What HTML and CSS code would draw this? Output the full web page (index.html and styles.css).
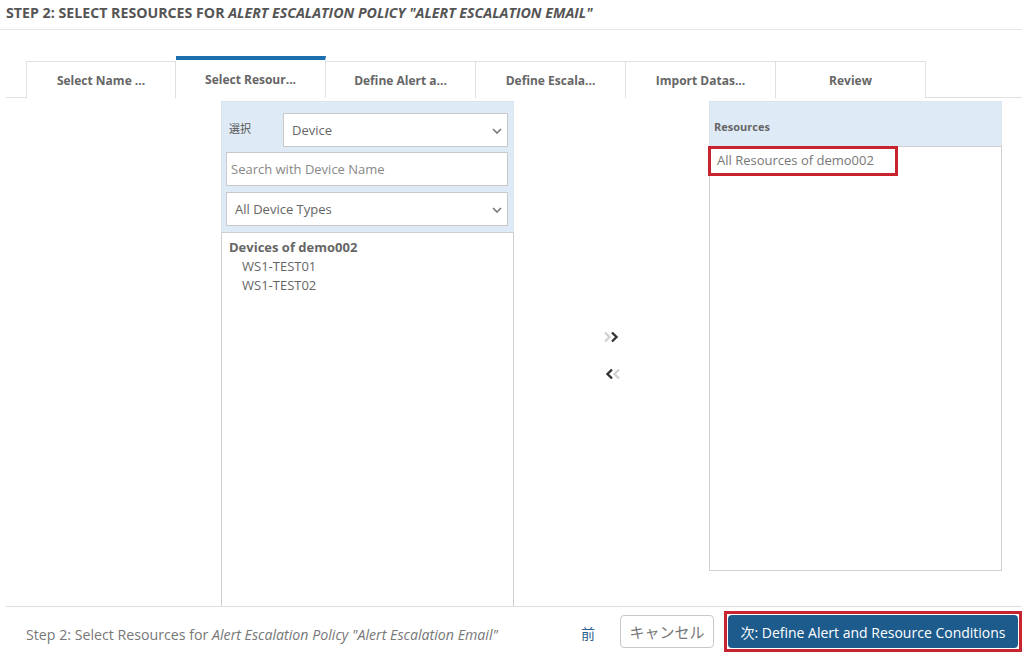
FILE: index.html
```html
<!DOCTYPE html>
<html lang="ja">
<head>
  <meta charset="UTF-8">
  <meta name="viewport" content="width=device-width, initial-scale=1.0">
  <title>Alert Escalation Policy - Step 2</title>
  <link rel="stylesheet" href="styles.css">
</head>
<body>
  <div class="page-title">
    STEP 2: SELECT RESOURCES FOR <em>ALERT ESCALATION POLICY "ALERT ESCALATION EMAIL"</em>
  </div>

  <div class="wizard">
    <ul class="tabs">
      <li>Select Name ...</li>
      <li class="active">Select Resour...</li>
      <li>Define Alert a...</li>
      <li>Define Escala...</li>
      <li>Import Datas...</li>
      <li>Review</li>
    </ul>

    <div class="picker">
      <div class="panel">
        <div class="panel-head">
          <div class="field-row">
            <label class="field-label">選択</label>
            <div class="select-wrap grow">
              <select class="control">
                <option>Device</option>
              </select>
              <svg class="caret" width="10" height="6" viewBox="0 0 10 6"><path d="M1 1l4 4 4-4" fill="none" stroke="#777" stroke-width="1.6"/></svg>
            </div>
          </div>
          <input class="control search" type="text" placeholder="Search with Device Name">
          <div class="select-wrap types">
            <select class="control">
              <option>All Device Types</option>
            </select>
            <svg class="caret" width="10" height="6" viewBox="0 0 10 6"><path d="M1 1l4 4 4-4" fill="none" stroke="#777" stroke-width="1.6"/></svg>
          </div>
        </div>
        <div class="panel-list tall">
          <div class="group-name">Devices of demo002</div>
          <div class="list-item">WS1-TEST01</div>
          <div class="list-item">WS1-TEST02</div>
        </div>
      </div>

      <div class="movers">
        <button class="mover">
          <svg width="18" height="12" viewBox="0 0 18 12">
            <path d="M2 1.5l4.5 4.5L2 10.5" fill="none" stroke="#d0d0d0" stroke-width="2.4"/>
            <path d="M9 1.5l4.5 4.5L9 10.5" fill="none" stroke="#333" stroke-width="2.4"/>
          </svg>
        </button>
        <button class="mover">
          <svg width="18" height="12" viewBox="0 0 18 12">
            <path d="M9 1.5L4.5 6 9 10.5" fill="none" stroke="#333" stroke-width="2.4"/>
            <path d="M16 1.5L11.5 6l4.5 4.5" fill="none" stroke="#d0d0d0" stroke-width="2.4"/>
          </svg>
        </button>
      </div>

      <div class="panel">
        <div class="panel-head short">Resources</div>
        <div class="panel-list">
          <div class="resource-item">All Resources of demo002</div>
        </div>
      </div>
    </div>
  </div>

  <div class="footer">
    <div class="footer-text">Step 2: Select Resources for <em>Alert Escalation Policy "Alert Escalation Email"</em></div>
    <div class="actions">
      <a class="prev-link">前</a>
      <button class="btn btn-cancel">キャンセル</button>
      <span class="highlight">
        <button class="btn btn-primary">次: Define Alert and Resource Conditions</button>
      </span>
    </div>
  </div>
</body>
</html>
```

FILE: styles.css
```css
body {
  margin: 0;
  font-family: 'Open Sans', 'Noto Sans CJK JP', sans-serif;
  color: #666;
  background: #fff;
  width: 1022px;
  height: 653px;
  overflow: hidden;
}
.page-title {
  height: 30px;
  line-height: 25px;
  padding-left: 6px;
  font-size: 14.2px;
  font-weight: 700;
  color: #555;
  border-bottom: 1px solid #e6e6e6;
  box-sizing: border-box;
  white-space: nowrap;
}
.page-title em {
  font-style: italic;
}
.wizard {
  margin-left: 6px;
}
.tabs {
  list-style: none;
  margin: 26px 0 0;
  padding: 0 0 0 20px;
  display: flex;
  align-items: flex-end;
  border-bottom: 1px solid #e0e0e0;
  height: 42px;
  box-sizing: border-box;
}
.tabs li {
  width: 150px;
  height: 37px;
  box-sizing: border-box;
  border: 1px solid #e0e0e0;
  border-bottom: none;
  border-left: none;
  margin-bottom: -1px;
  background: #fff;
  font-size: 12px;
  font-weight: 700;
  color: #666;
  text-align: center;
  line-height: 38px;
}
.tabs li:first-child {
  border-left: 1px solid #e0e0e0;
}
.tabs li.active {
  height: 42px;
  border-top: 4px solid #1b6fae;
  line-height: 39px;
  border-bottom: 1px solid #fff;
}
.picker {
  display: grid;
  grid-template-columns: 293px 195px 293px;
  margin: 3px 0 0 215px;
}
.panel {
  display: flex;
  flex-direction: column;
}
.panel-head {
  background: #deebf6;
  padding: 11px 5px 6px 4px;
  display: flex;
  flex-direction: column;
  gap: 5px;
  border: 1px solid #dbe5ee;
  border-bottom: none;
}
.panel-head .types {
  margin-top: 1px;
}
.panel-head.short {
  height: 45px;
  box-sizing: border-box;
  padding: 17px 4px 0;
  font-size: 11px;
  font-weight: 700;
  color: #666;
}
.field-row {
  display: flex;
  align-items: center;
}
.field-label {
  width: 57px;
  padding-left: 3px;
  box-sizing: border-box;
  font-size: 11px;
  color: #555;
  margin-top: -4px;
}
.grow {
  flex: 1;
}
.select-wrap {
  position: relative;
}
.caret {
  position: absolute;
  right: 6px;
  top: 15px;
  pointer-events: none;
}
.control {
  display: block;
  width: 100%;
  height: 34px;
  box-sizing: border-box;
  border: 1px solid #c9c9c9;
  background: #fff;
  font-family: inherit;
  font-size: 13px;
  color: #666;
  padding: 0 8px;
  -webkit-appearance: none;
  appearance: none;
  border-radius: 0;
  outline: none;
}
.control.search {
  padding: 0 4px;
}
.control::placeholder {
  color: #888;
}
.panel-list {
  border: 1px solid #cfcfcf;
  height: 425px;
  box-sizing: border-box;
  padding: 0;
}
.panel-list.tall {
  height: 374px;
  border-bottom: none;
  padding: 5px 7px;
}
.group-name {
  font-size: 13px;
  font-weight: 700;
  color: #666;
  line-height: 19px;
}
.list-item {
  font-size: 13px;
  color: #666;
  line-height: 19px;
  padding-left: 13px;
}
.resource-item {
  display: inline-block;
  margin: 1px 0 0 0;
  padding: 3px 9px 4px 7px;
  font-size: 13px;
  line-height: 19px;
  color: #777;
  outline: 3px solid #c7242f;
  outline-offset: -1px;
  width: 186px;
  box-sizing: border-box;
}
.movers {
  display: flex;
  flex-direction: column;
  align-items: center;
  padding-top: 228px;
  gap: 19px;
}
.mover {
  border: none;
  background: none;
  padding: 0;
  width: 18px;
  height: 18px;
  cursor: pointer;
}
.footer {
  margin-left: 6px;
  border-top: 1px solid #dedede;
  display: flex;
  justify-content: space-between;
  align-items: center;
  padding: 4px 0 0 20px;
}
.footer-text {
  font-size: 14.2px;
  color: #777;
  padding-top: 6px;
}
.footer-text em {
  font-style: italic;
}
.actions {
  display: flex;
  align-items: center;
}
.prev-link {
  font-size: 14px;
  color: #2c5f8c;
  margin-right: 25px;
  padding-top: 3px;
}
.btn {
  height: 33px;
  font-family: inherit;
  border-radius: 4px;
  cursor: pointer;
}
.btn-cancel {
  width: 94px;
  border: 1px solid #c8c8c8;
  background: #fff;
  color: #777;
  font-size: 15px;
  margin-right: 10px;
}
.highlight {
  display: block;
  border: 3px solid #c7242f;
  padding: 1px;
}
.btn-primary {
  display: block;
  width: 290px;
  border: none;
  background: #1d5b8c;
  color: #fff;
  font-size: 14px;
}
```
